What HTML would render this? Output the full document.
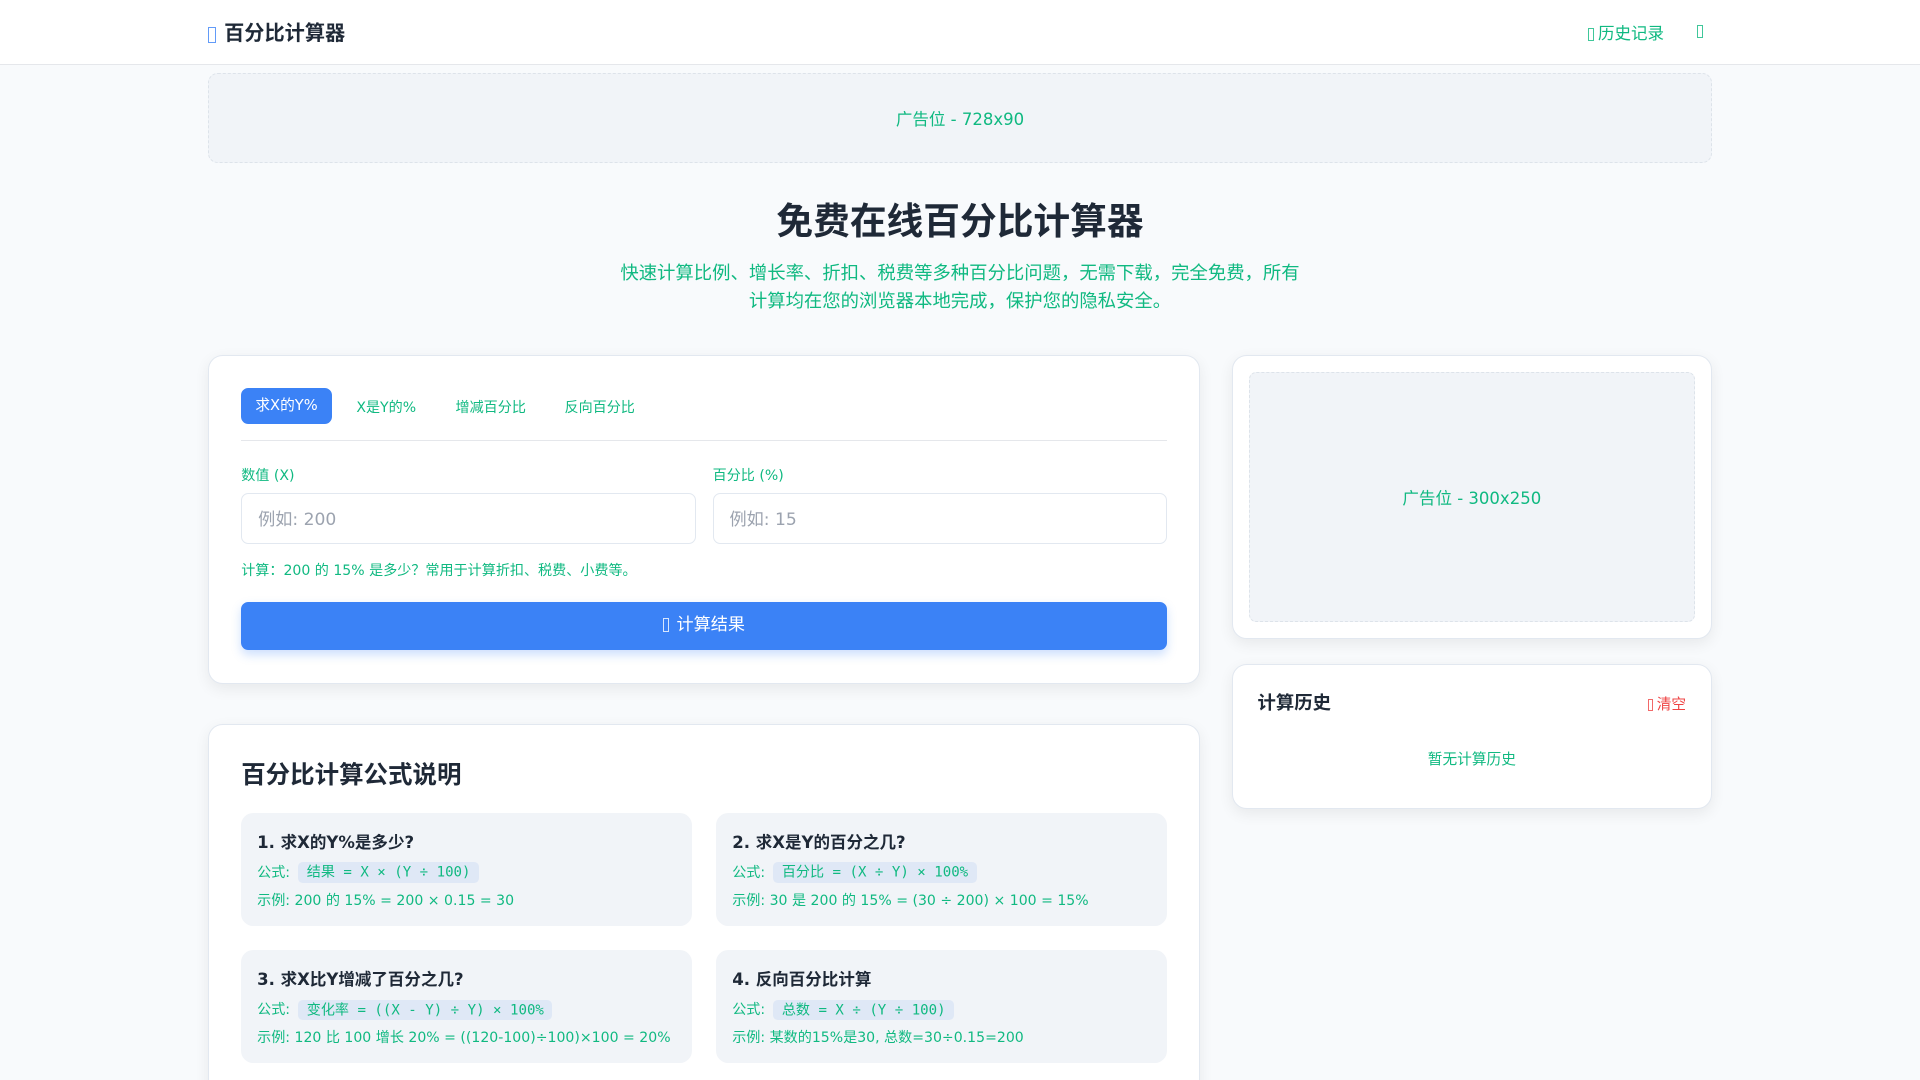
<!DOCTYPE html>
<html><head><meta charset="utf-8"><style>
*{box-sizing:border-box;margin:0;padding:0}
html,body{width:1568px;height:882px;overflow:hidden}
body{zoom:1.22449;background:#f8fafc;font-family:"DejaVu Sans","Noto Sans CJK SC",sans-serif;color:#10b981;position:relative}
.ab{position:absolute}
.tofu{display:inline-block;width:6px;height:13px;border:1px solid currentColor;vertical-align:-2px;opacity:.8}
header{position:absolute;left:0;top:0;width:1568px;height:53px;background:#fff;border-bottom:1px solid #e5e7eb}
.card{position:absolute;background:#fff;border:1px solid #e2e8f0;border-radius:12px;box-shadow:0 4px 12px rgba(0,0,0,.07)}
.ad{background:#f1f4f8;border:1px dashed #dde3ea;border-radius:6px;display:flex;align-items:center;justify-content:center;font-size:13.5px;color:#10b981}
.inp{position:absolute;height:41px;border:1px solid #e2e8f0;border-radius:6px;color:#9ca3af;font-size:14px;padding:9px 13px}
.box{position:absolute;width:368px;height:92px;background:#f1f4f8;border-radius:10px;padding:13px 13px;white-space:nowrap}
.box h4{font-size:13.5px;color:#1f2937;font-weight:bold;height:20px}
.box .f{font-size:11.5px;margin-top:6px;height:20px;line-height:20px}
.box code{font-family:"DejaVu Sans Mono","Noto Sans CJK SC",monospace;background:#dfe8f6;border-radius:4px;padding:2px 7px;font-size:11.5px;margin-left:3px}
.box .e{font-size:11.5px;margin-top:4px}
</style></head><body>
<header>
<div class="ab" style="left:170px;top:14px;font-size:16.5px;font-weight:bold;color:#1f2937"><span class="tofu" style="color:#3b82f6;margin-right:7px"></span>百分比计算器</div>
<div class="ab" style="left:1297px;top:16px;font-size:13.5px"><span class="tofu" style="width:5px;height:11px;margin-right:3px"></span>历史记录</div>
<div class="ab" style="left:1386px;top:17px;font-size:14px"><span class="tofu" style="width:5px;height:11px"></span></div>
</header>
<div class="ab ad" style="left:170px;top:60px;width:1228px;height:73px;border-radius:8px">广告位 - 728x90</div>
<div class="ab" style="left:0;width:1568px;top:156px;text-align:center;font-size:30px;font-weight:bold;color:#1f2937">免费在线百分比计算器</div>
<div class="ab" style="left:504px;width:560px;top:212px;text-align:center;font-size:15px;line-height:23px">快速计算比例、增长率、折扣、税费等多种百分比问题，无需下载，完全免费，所有<br>计算均在您的浏览器本地完成，保护您的隐私安全。</div>

<div class="card" style="left:170px;top:290px;width:810px;height:269px"></div>
<div class="ab" style="left:197px;top:317px;width:74px;height:29px;background:#3b82f6;border-radius:6px;color:#fff;font-size:12px;text-align:center;line-height:29px">求X的Y%</div>
<div class="ab" style="left:291px;top:324px;font-size:11.5px">X是Y的%</div>
<div class="ab" style="left:372px;top:324px;font-size:11.5px">增减百分比</div>
<div class="ab" style="left:461px;top:324px;font-size:11.5px">反向百分比</div>
<div class="ab" style="left:197px;top:359px;width:756px;height:1px;background:#e5e7eb"></div>
<div class="ab" style="left:197px;top:380px;font-size:11.5px">数值 (X)</div>
<div class="ab" style="left:582px;top:380px;font-size:11.5px">百分比 (%)</div>
<div class="inp" style="left:197px;top:403px;width:371px">例如: 200</div>
<div class="inp" style="left:582px;top:403px;width:371px">例如: 15</div>
<div class="ab" style="left:197px;top:457px;font-size:11.5px">计算：200 的 15% 是多少？常用于计算折扣、税费、小费等。</div>
<div class="ab" style="left:197px;top:492px;width:756px;height:39px;background:#3b82f6;border-radius:6px;color:#fff;font-size:14px;text-align:center;line-height:39px;box-shadow:0 4px 8px rgba(59,130,246,.25)"><span class="tofu" style="width:5px;height:11px;margin-right:6px;vertical-align:-1px"></span>计算结果</div>

<div class="card" style="left:170px;top:591px;width:810px;height:320px"></div>
<div class="ab" style="left:197px;top:617px;font-size:20px;font-weight:bold;color:#1f2937">百分比计算公式说明</div>
<div class="box" style="left:197px;top:664px"><h4>1. 求X的Y%是多少?</h4><div class="f">公式: <code>结果 = X × (Y ÷ 100)</code></div><div class="e">示例: 200 的 15% = 200 × 0.15 = 30</div></div>
<div class="box" style="left:585px;top:664px"><h4>2. 求X是Y的百分之几?</h4><div class="f">公式: <code>百分比 = (X ÷ Y) × 100%</code></div><div class="e">示例: 30 是 200 的 15% = (30 ÷ 200) × 100 = 15%</div></div>
<div class="box" style="left:197px;top:776px"><h4>3. 求X比Y增减了百分之几?</h4><div class="f">公式: <code>变化率 = ((X - Y) ÷ Y) × 100%</code></div><div class="e">示例: 120 比 100 增长 20% = ((120-100)÷100)×100 = 20%</div></div>
<div class="box" style="left:585px;top:776px"><h4>4. 反向百分比计算</h4><div class="f">公式: <code>总数 = X ÷ (Y ÷ 100)</code></div><div class="e">示例: 某数的15%是30, 总数=30÷0.15=200</div></div>

<div class="card" style="left:1006px;top:290px;width:392px;height:232px"></div>
<div class="ab ad" style="left:1020px;top:304px;width:364px;height:204px">广告位 - 300x250</div>
<div class="card" style="left:1006px;top:542px;width:392px;height:119px"></div>
<div class="ab" style="left:1027px;top:563px;font-size:15px;font-weight:bold;color:#1f2937">计算历史</div>
<div class="ab" style="left:1346px;top:566px;font-size:12px;color:#ef4444"><span class="tofu" style="width:4px;height:10px;margin-right:3px"></span>清空</div>
<div class="ab" style="left:1006px;width:392px;top:611px;text-align:center;font-size:12px">暂无计算历史</div>
</body></html>
